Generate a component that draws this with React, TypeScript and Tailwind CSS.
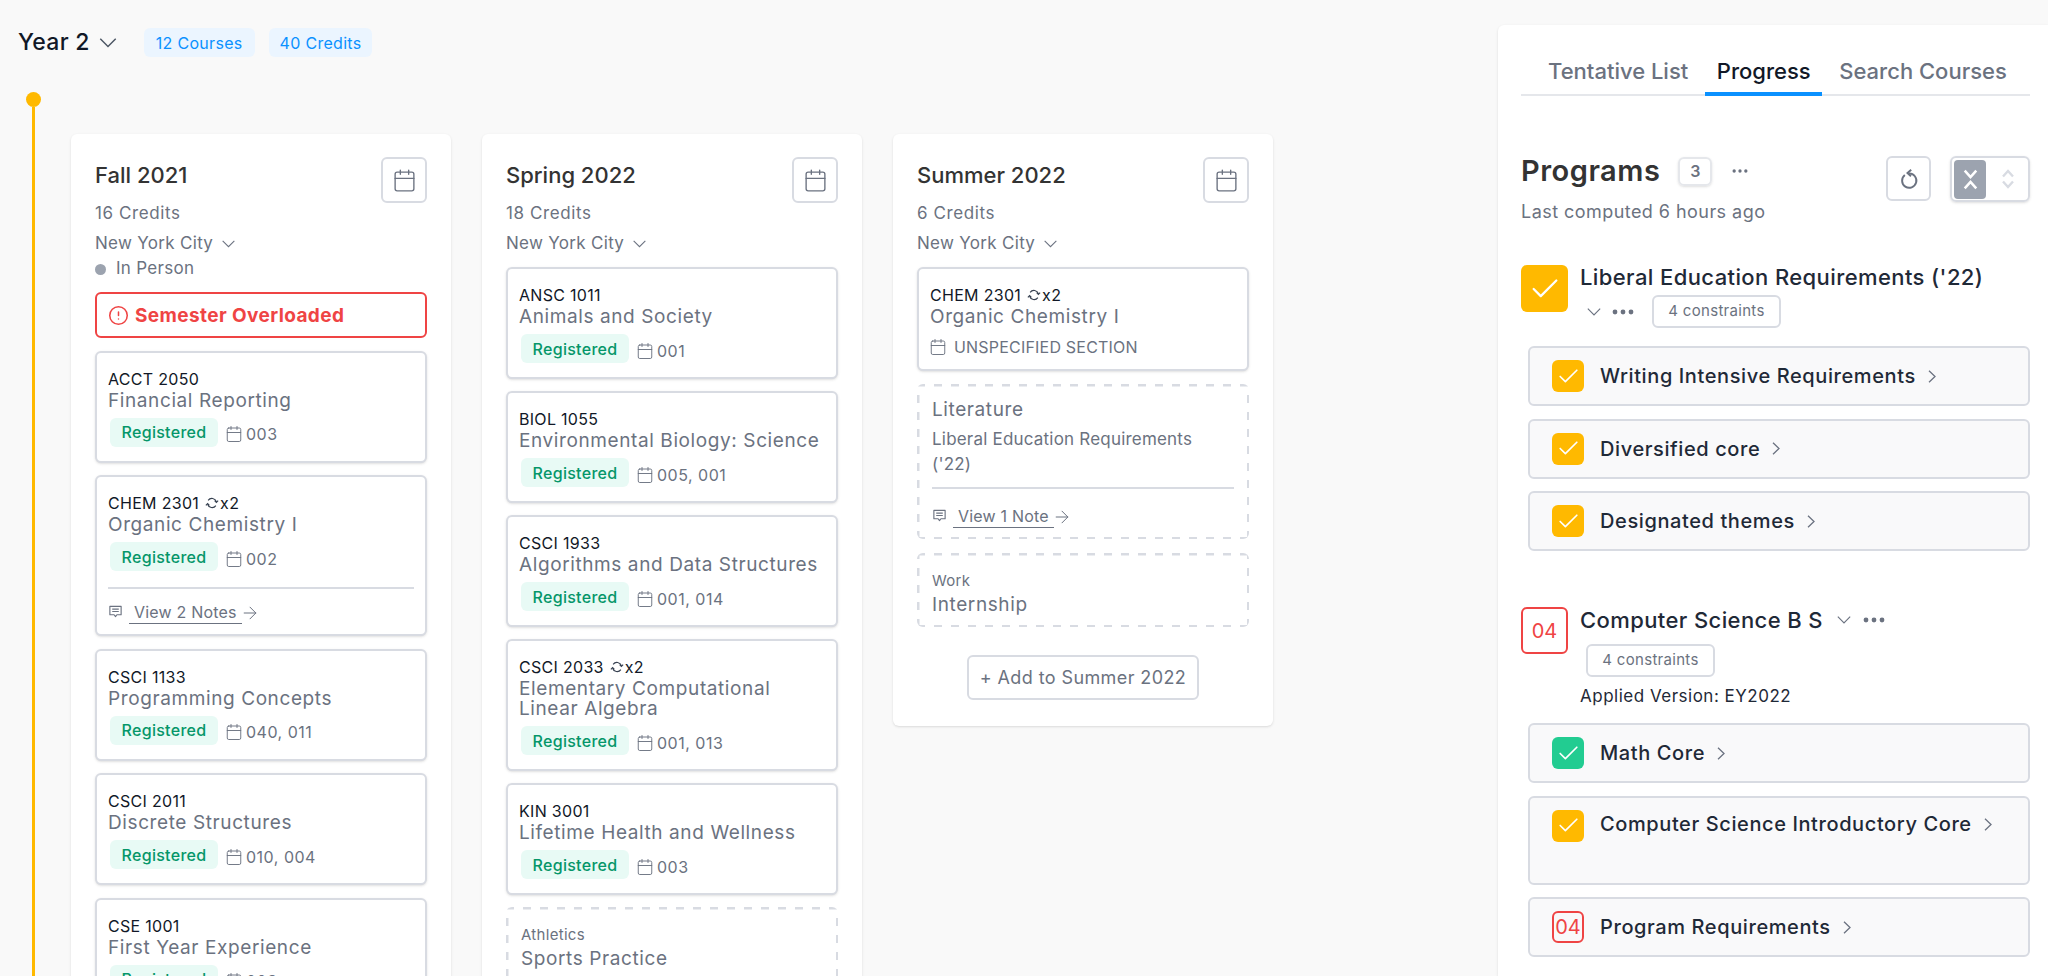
import React from 'react';
import { AlertCircle, ArrowRight, Calendar, Check, MoreHorizontal } from 'lucide-react';

interface Course {
  code: string;
  name: string;
  repeat?: boolean;
  sections?: string;
  notes?: string;
}

interface Semester {
  title: string;
  credits: string;
  inPerson?: boolean;
  overloaded?: boolean;
  courses: Course[];
  footer?: React.ReactNode;
}

const ChevronDownIcon = ({ className }: { className: string }) => (
  <svg viewBox="0 0 12 7" className={`shrink-0 ${className}`} fill="none" stroke="currentColor" strokeWidth="1">
    <path d="M.6.6 6 6 11.4.6" />
  </svg>
);

const ChevronRightIcon = ({ className = '' }: { className?: string }) => (
  <svg viewBox="0 0 8 13" className={`w-[8px] h-[13px] shrink-0 text-[#6b7280] ${className}`} fill="none" stroke="currentColor" strokeWidth="1.3">
    <path d="M1 .8 7 6.5 1 12.2" />
  </svg>
);

const DotsIcon = () => (
  <svg viewBox="0 0 22 6" className="w-[22px] h-[6px] shrink-0 text-[#6b7280]" fill="currentColor">
    <circle cx="3" cy="3" r="2.4" />
    <circle cx="11" cy="3" r="2.4" />
    <circle cx="19" cy="3" r="2.4" />
  </svg>
);

const RepeatIcon = () => (
  <svg viewBox="0 0 16 16" className="w-[14px] h-[14px] ml-[6px] mr-[1px] text-[#374151]" fill="none" stroke="currentColor" strokeWidth="1.3">
    <path d="M3.6 5A5.3 5.3 0 0 1 13 6.6" />
    <path d="M11 5.2l2 2.2 2-2.2" />
    <path d="M12.4 11A5.3 5.3 0 0 1 3 9.4" />
    <path d="M5 10.8 3 8.6l-2 2.2" />
  </svg>
);

const NoteIcon = () => (
  <svg viewBox="0 0 16 16" className="w-[15px] h-[15px] text-[#6b7280] shrink-0 -mt-[3px]" fill="none" stroke="currentColor" strokeWidth="1.2">
    <path d="M2 2.5h12v9H9.5L8 13.5 6.5 11.5H2z" strokeLinejoin="round" />
    <path d="M4.5 5.5h7M4.5 8h7" />
  </svg>
);

const NotesLink = ({ label, dividerClass, rowClass }: { label: string; dividerClass: string; rowClass: string }) => (
  <>
    <div className={`h-0.5 bg-[#d8dbe2] ${dividerClass}`} />
    <div className={`flex items-center text-[16px] text-[#6b7280] tracking-[0.2px] ${rowClass}`}>
      <NoteIcon />
      <span className="ml-[6px] px-[5px] border-b border-[#6b7280] leading-[22px]">{label}</span>
      <ArrowRight className="w-[20px] h-[20px] -ml-[2px] shrink-0" strokeWidth={1.2} />
    </div>
  </>
);

const CourseCard = ({ code, name, repeat, sections, notes }: Course) => (
  <div className="bg-white border-2 border-[#d8dbe2] rounded-md shadow-sm pt-[17px] pb-[14px] px-[11px]">
    <div className="flex items-center text-[16px] leading-[18px] text-[#111827] tracking-[0.3px]">
      {code}
      {repeat && (
        <>
          <RepeatIcon />
          <span>x2</span>
        </>
      )}
    </div>
    <div className="max-w-[312px] text-[19px] leading-[20px] mt-[3px] -mb-[1px] text-[#6b7280] tracking-[0.6px]">{name}</div>
    {sections ? (
      <div className="flex items-center mt-[8px]">
        <span className="ml-[2px] h-[29px] w-[108px] flex items-center justify-center rounded-md bg-[#e8faf5] text-[#059669] text-[16px] font-medium tracking-[0.3px]">
          Registered
        </span>
        <Calendar className="w-[18px] h-[18px] ml-[7px] text-[#6b7280] mt-[4px]" strokeWidth={1.25} />
        <span className="ml-[3px] mt-[4px] text-[16px] text-[#6b7280] tracking-[0.5px]">{sections}</span>
      </div>
    ) : (
      <div className="flex items-center mt-[9px] -mb-[4px] h-[24px] text-[16px] text-[#6b7280] tracking-[0.2px]">
        <Calendar className="w-[18px] h-[18px] -ml-[1px] text-[#6b7280]" strokeWidth={1.25} />
        <span className="ml-[7px]">UNSPECIFIED SECTION</span>
      </div>
    )}
    {notes && <NotesLink label={notes} dividerClass="mt-[16px]" rowClass="mt-[12px] -mb-[4px]" />}
  </div>
);

const dashedEdges =
  '[background:repeating-linear-gradient(90deg,#d8dbe2_0_8px,transparent_8px_17px)_0_0/100%_2.5px_no-repeat,repeating-linear-gradient(90deg,#d8dbe2_0_8px,transparent_8px_17px)_0_100%/100%_2.5px_no-repeat,repeating-linear-gradient(0deg,#d8dbe2_0_8px,transparent_8px_17px)_0_0/2.5px_100%_no-repeat,repeating-linear-gradient(0deg,#d8dbe2_0_8px,transparent_8px_17px)_100%_0/2.5px_100%_no-repeat,#ffffff]';

const DashedCard = ({ className, children }: { className: string; children: React.ReactNode }) => (
  <div className={`${dashedEdges} rounded-md px-[15px] text-[#6b7280] ${className}`}>{children}</div>
);

const semesters: Semester[] = [
  {
    title: 'Fall 2021',
    credits: '16 Credits',
    inPerson: true,
    overloaded: true,
    courses: [
      { code: 'ACCT 2050', name: 'Financial Reporting', sections: '003' },
      { code: 'CHEM 2301', repeat: true, name: 'Organic Chemistry I', sections: '002', notes: 'View 2 Notes' },
      { code: 'CSCI 1133', name: 'Programming Concepts', sections: '040, 011' },
      { code: 'CSCI 2011', name: 'Discrete Structures', sections: '010, 004' },
      { code: 'CSE 1001', name: 'First Year Experience', sections: '003' },
    ],
  },
  {
    title: 'Spring 2022',
    credits: '18 Credits',
    courses: [
      { code: 'ANSC 1011', name: 'Animals and Society', sections: '001' },
      { code: 'BIOL 1055', name: 'Environmental Biology: Science', sections: '005, 001' },
      { code: 'CSCI 1933', name: 'Algorithms and Data Structures', sections: '001, 014' },
      { code: 'CSCI 2033', repeat: true, name: 'Elementary Computational Linear Algebra', sections: '001, 013' },
      { code: 'KIN 3001', name: 'Lifetime Health and Wellness', sections: '003' },
    ],
    footer: (
      <DashedCard className="pt-[18px] pb-[10px]">
        <div className="text-[15px] leading-[20px] tracking-[0.3px]">Athletics</div>
        <div className="text-[19px] leading-[24px] mt-[2px] tracking-[0.6px]">Sports Practice</div>
        <div className="h-[30px]" />
      </DashedCard>
    ),
  },
  {
    title: 'Summer 2022',
    credits: '6 Credits',
    courses: [{ code: 'CHEM 2301', repeat: true, name: 'Organic Chemistry I' }],
    footer: (
      <>
        <DashedCard className="pt-[14px] pb-[11px] mt-[1px]">
          <div className="text-[19px] leading-[24px] tracking-[0.6px]">Literature</div>
          <div className="max-w-[290px] text-[17px] leading-[25px] mt-[5px] tracking-[0.2px]">Liberal Education Requirements ('22)</div>
          <NotesLink label="View 1 Note" dividerClass="mt-[10px]" rowClass="mt-[16px]" />
        </DashedCard>
        <DashedCard className="pt-[18px] pb-[10px] mt-[2px]">
          <div className="text-[15px] leading-[20px] tracking-[0.3px]">Work</div>
          <div className="text-[19px] leading-[24px] mt-[2px] tracking-[0.6px]">Internship</div>
        </DashedCard>
        <button className="self-center mt-[16px] w-[232px] h-[45px] rounded-md border-2 border-[#d8dbe2] bg-white text-[18px] text-[#6b7280] tracking-[0.4px]">
          + Add to Summer 2022
        </button>
      </>
    ),
  },
];

const SemesterCard = ({ title, credits, inPerson, overloaded, courses, footer }: Semester) => (
  <div className="w-[380px] shrink-0 self-start bg-white rounded-md shadow px-[24px] pt-[23px] pb-[26px]">
    <div className="flex justify-between">
      <div className="pt-[3px]">
        <h2 className="text-[22px] leading-[30px] font-medium text-[#333333]">{title}</h2>
        <div className="text-[17px] leading-[24px] mt-[11px] text-[#6b7280] tracking-[0.6px]">{credits}</div>
      </div>
      <button className="w-[46px] h-[46px] rounded-md border-2 border-[#d8dbe2] flex items-center justify-center text-[#6b7280]">
        <Calendar className="w-[25px] h-[25px]" strokeWidth={1.3} />
      </button>
    </div>
    <div className="flex items-center mt-[7px] h-[24px] text-[17px] text-[#6b7280] tracking-[0.3px]">
      New York City
      <ChevronDownIcon className="w-[13px] h-[8px] ml-[9px]" />
    </div>
    {inPerson && (
      <div className="flex items-center h-[26px] text-[17px] text-[#6b7280] tracking-[0.3px]">
        <span className="w-[11px] h-[11px] rounded-full bg-[#9ca3af] mr-[10px]" />
        In Person
      </div>
    )}
    <div className={`flex flex-col ${inPerson ? 'mt-[10px] gap-[12.5px]' : 'mt-[11px] gap-[12px]'}`}>
      {overloaded && (
        <div className="h-[46px] rounded-md border-2 border-[#ef4444] flex items-center px-[11px] text-[#ef4444] font-bold text-[19px] tracking-[0.4px]">
          <AlertCircle className="w-[21px] h-[21px] mr-[6px]" strokeWidth={1.75} />
          <span className="pt-[3px]">Semester Overloaded</span>
        </div>
      )}
      {courses.map((c) => (
        <CourseCard key={c.code} {...c} />
      ))}
      {footer}
    </div>
  </div>
);

type Status = 'warn' | 'ok' | 'fail';

const StatusBox = ({ status, large }: { status: Status; large?: boolean }) => {
  const size = large ? 'w-[47px] h-[47px]' : 'w-[32px] h-[32px]';
  if (status === 'fail') {
    return (
      <div className={`${size} shrink-0 rounded-md border-2 border-[#ef4444] text-[#ef4444] flex items-center justify-center text-[20px]`}>
        04
      </div>
    );
  }
  return (
    <div className={`${size} shrink-0 rounded-md flex items-center justify-center text-white ${status === 'ok' ? 'bg-[#22cc91]' : 'bg-[#ffb900]'}`}>
      <Check className={large ? 'w-[34px] h-[34px]' : 'w-[25px] h-[25px]'} strokeWidth={1.6} />
    </div>
  );
};

const Requirement = ({ status, label, tall }: { status: Status; label: string; tall?: boolean }) => (
  <div className={`ml-[7px] rounded-md border-2 border-[#d8dbe2] bg-[#f9f9fa] flex pl-[22px] ${tall ? 'h-[89px] items-start pt-[12px]' : 'h-[60px] items-center'}`}>
    <StatusBox status={status} />
    <span className="ml-[16px] text-[20px] leading-[28px] font-medium text-[#1f2937] tracking-[0.6px]">{label}</span>
    <ChevronRightIcon className={tall ? 'ml-[12px] mt-[8px]' : 'ml-[12px]'} />
  </div>
);

const Constraints = () => (
  <span className="inline-flex items-center justify-center w-[129px] h-[33px] rounded-md border-2 border-[#d8dbe2] text-[15px] text-[#6b7280] tracking-[0.3px]">
    4 constraints
  </span>
);

export default function App() {
  return (
    <div className="flex h-[976px] overflow-hidden bg-[#f9f9f9] font-['Inter',sans-serif]">
      <main className="flex-1 min-w-0 flex flex-col">
        <header className="flex items-center pl-[18px] pt-[25px] h-[60px]">
          <span className="text-[23px] font-medium text-[#111827] tracking-[0.3px]">Year 2</span>
          <ChevronDownIcon className="w-[18px] h-[10px] ml-[9px] text-[#4b5563]" />
          <span className="ml-[27px] h-[29px] px-[12px] flex items-center rounded-md bg-[#ebf5ff] text-[16px] text-[#0a91ff] tracking-[0.3px]">12 Courses</span>
          <span className="ml-[14px] h-[29px] px-[11px] flex items-center rounded-md bg-[#ebf5ff] text-[16px] text-[#0a91ff] tracking-[0.3px]">40 Credits</span>
        </header>
        <div className="flex flex-1 min-h-0 pl-[26px] pt-[32px]">
          <div className="flex flex-col items-center w-[15px] shrink-0">
            <span className="w-[15px] h-[15px] rounded-full bg-[#ffb900] shrink-0" />
            <span className="w-[3px] flex-1 bg-[#ffb900]" />
          </div>
          <div className="flex items-start gap-[31px] ml-[30px] pt-[42px]">
            {semesters.map((s) => (
              <SemesterCard key={s.title} {...s} />
            ))}
          </div>
        </div>
      </main>

      <aside className="w-[550px] shrink-0 mt-[25px] bg-white rounded-tl-md shadow pl-[23px] pr-[18px]">
        <div className="flex items-end h-[71px] border-b-2 border-[#e5e7eb] text-[22px] font-medium text-[#6b7280] pl-[27px]">
          <span className="h-[46px] flex items-center">Tentative List</span>
          <span className="ml-[17px] h-[46px] w-[117px] flex items-center justify-center text-[#111827] border-b-4 border-[#0a91ff] -mb-[2px]">Progress</span>
          <span className="ml-[17px] h-[46px] flex items-center">Search Courses</span>
        </div>

        <div className="flex justify-between mt-[60px]">
          <div>
            <div className="flex items-center">
              <h1 className="text-[29px] leading-[30px] font-semibold text-[#333333] tracking-[0.5px]">Programs</h1>
              <span className="ml-[18px] w-[34px] h-[29px] rounded-md border-2 border-[#e5e7eb] shadow-sm flex items-center justify-center text-[16px] font-semibold text-[#6b7280]">3</span>
              <MoreHorizontal className="w-[20px] h-[20px] ml-[18px] text-[#6b7280]" />
            </div>
            <div className="text-[18px] leading-[24px] mt-[14px] text-[#6b7280] tracking-[0.45px]">Last computed 6 hours ago</div>
          </div>
          <div className="flex items-start">
            <button className="w-[45px] h-[45px] rounded-md border-2 border-[#d8dbe2] flex items-center justify-center text-[#6b7280]">
              <svg viewBox="0 0 20 20" className="w-[22px] h-[22px]" fill="none" stroke="currentColor" strokeWidth="1.75">
                <path d="M6.2 6.4A6.5 6.5 0 1 0 10 5" />
                <path d="M12 1.6 8.6 4.6l3.2 2.9" />
              </svg>
            </button>
            <div className="ml-[19px] w-[80px] h-[46px] rounded-md border-2 border-[#d8dbe2] shadow-sm p-[2px] flex items-center">
              <span className="w-[32px] h-[39px] rounded bg-[#9ca3af] flex items-center justify-center text-white">
                <svg viewBox="0 0 14 20" className="w-[15px] h-[21px]" fill="none" stroke="currentColor" strokeWidth="2.4">
                  <path d="M1.5 1.5 7 7.8l5.5-6.3" />
                  <path d="M1.5 18.5 7 12.2l5.5 6.3" />
                </svg>
              </span>
              <span className="flex-1 flex items-center justify-center pl-[4px] text-[#d8dbe2]">
                <svg viewBox="0 0 14 20" className="w-[14px] h-[20px]" fill="none" stroke="currentColor" strokeWidth="2.4">
                  <path d="M2 7.5 7 2l5 5.5" />
                  <path d="M2 12.5 7 18l5-5.5" />
                </svg>
              </span>
            </div>
          </div>
        </div>

        <div className="flex mt-[41px]">
          <StatusBox status="warn" large />
          <div className="ml-[12px] -mt-[1px]">
            <div className="text-[22px] leading-[26px] font-medium text-[#1f2937] tracking-[0.4px]">Liberal Education Requirements ('22)</div>
            <div className="flex items-center mt-[5px]">
              <ChevronDownIcon className="w-[14px] h-[8px] ml-[7px] text-[#6b7280]" />
              <span className="ml-[11px]"><DotsIcon /></span>
              <span className="ml-[18px] flex"><Constraints /></span>
            </div>
          </div>
        </div>
        <div className="flex flex-col gap-[12.5px] mt-[18px]">
          <Requirement status="warn" label="Writing Intensive Requirements" />
          <Requirement status="warn" label="Diversified core" />
          <Requirement status="warn" label="Designated themes" />
        </div>

        <div className="flex mt-[56px]">
          <StatusBox status="fail" large />
          <div className="ml-[12px] -mt-[1px]">
            <div className="flex items-center">
              <span className="text-[22px] leading-[28px] font-medium text-[#1f2937] tracking-[0.4px]">Computer Science B S</span>
              <ChevronDownIcon className="w-[14px] h-[8px] ml-[14px] text-[#6b7280]" />
              <span className="ml-[12px]"><DotsIcon /></span>
            </div>
            <div className="flex ml-[6px] mt-[10px]"><Constraints /></div>
            <div className="text-[17px] leading-[24px] mt-[7px] text-[#1f2937] tracking-[0.5px]">Applied Version: EY2022</div>
          </div>
        </div>
        <div className="flex flex-col gap-[12.5px] mt-[15px]">
          <Requirement status="ok" label="Math Core" />
          <Requirement status="warn" label="Computer Science Introductory Core" tall />
          <Requirement status="fail" label="Program Requirements" />
        </div>
      </aside>
    </div>
  );
}
